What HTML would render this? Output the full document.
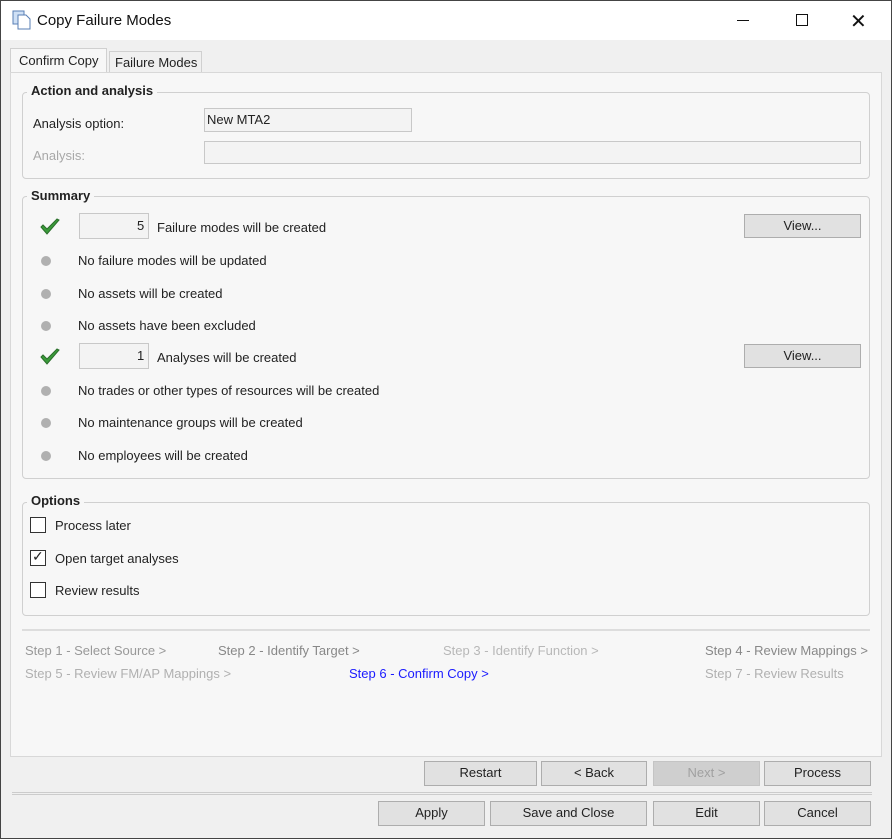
<!DOCTYPE html>
<html><head><style>
*{box-sizing:border-box;margin:0;padding:0}
body{width:892px;height:839px;background:#f0f0f0;font-family:"Liberation Sans",sans-serif;font-size:13px;color:#222;position:relative;overflow:hidden}
.a{position:absolute;white-space:nowrap}
.win{position:absolute;left:0;top:0;width:892px;height:839px;border:1px solid #444}
.grp{position:absolute;border:1px solid #d0d0d0;border-radius:4px}
.gt{position:absolute;font-weight:bold;background:#f7f7f7;padding:0 4px;font-size:13px;color:#222}
.btn{position:absolute;background:#e1e1e1;border:1px solid #adadad;text-align:center;font-size:13px;line-height:22px;color:#222}
.box{position:absolute;border:1px solid #c8c8c8;background:#f3f3f3}
.dot{position:absolute;width:10px;height:10px;border-radius:50%;background:#b0b0b0}
.cb{position:absolute;width:16px;height:16px;border:1px solid #333;background:#fff}
.st{position:absolute;color:#a0a0a0;font-size:13px;white-space:nowrap}
</style></head><body>
<div class="a" style="left:0;top:0;width:892px;height:40px;background:#fff"></div>
<svg class="a" style="left:12px;top:10px" width="20" height="20"><rect x="1" y="1" width="11" height="13" fill="#cfe0f5" stroke="#5a7fb5"/><path d="M6 5h8l4 4v10H6z" fill="#fff" stroke="#5a7fb5"/></svg>
<div class="a" style="left:37px;top:12px;font-size:15px;color:#111">Copy Failure Modes</div>
<div class="a" style="left:737px;top:20px;width:12px;height:1px;background:#111"></div>
<div class="a" style="left:796px;top:14px;width:12px;height:12px;border:1px solid #111"></div>
<div class="a" style="left:850px;top:9px;font-size:20px;color:#111">✕</div>
<div class="a" style="left:10px;top:48px;width:97px;height:26px;background:#f7f7f7;border:1px solid #d0d0d0;border-bottom:none"></div>
<div class="a" style="left:19px;top:53px;font-size:13px">Confirm Copy</div>
<div class="a" style="left:109px;top:51px;width:93px;height:22px;background:#f0f0f0;border:1px solid #d0d0d0"></div>
<div class="a" style="left:115px;top:55px;font-size:13px">Failure Modes</div>
<div class="a" style="left:10px;top:72px;width:872px;height:685px;background:#f7f7f7;border:1px solid #d8d8d8"></div>
<div class="grp" style="left:22px;top:92px;width:848px;height:87px"></div>
<div class="gt" style="left:27px;top:83px">Action and analysis</div>
<div class="a" style="left:33px;top:116px">Analysis option:</div>
<div class="box" style="left:204px;top:108px;width:208px;height:24px"></div>
<div class="a" style="left:207px;top:112px">New MTA2</div>
<div class="a" style="left:33px;top:148px;color:#a8a8a8">Analysis:</div>
<div class="box" style="left:204px;top:141px;width:657px;height:23px"></div>
<div class="grp" style="left:22px;top:196px;width:848px;height:283px"></div>
<div class="gt" style="left:27px;top:188px">Summary</div>
<svg class="a" style="left:40px;top:218px" width="20" height="18"><path d="M1 9l6 7L19 2l-2-1L7 11 3 7z" fill="#3a9b3a" stroke="#2b6e2b"/></svg>
<div class="box" style="left:79px;top:213px;width:70px;height:26px"></div>
<div class="a" style="left:137px;top:218px">5</div>
<div class="a" style="left:157px;top:220px">Failure modes will be created</div>
<div class="btn" style="left:744px;top:214px;width:117px;height:24px">View...</div>
<div class="dot" style="left:41px;top:256px"></div><div class="a" style="left:78px;top:253px">No failure modes will be updated</div>
<div class="dot" style="left:41px;top:289px"></div><div class="a" style="left:78px;top:286px">No assets will be created</div>
<div class="dot" style="left:41px;top:321px"></div><div class="a" style="left:78px;top:318px">No assets have been excluded</div>
<svg class="a" style="left:40px;top:348px" width="20" height="18"><path d="M1 9l6 7L19 2l-2-1L7 11 3 7z" fill="#3a9b3a" stroke="#2b6e2b"/></svg>
<div class="box" style="left:79px;top:343px;width:70px;height:26px"></div>
<div class="a" style="left:137px;top:348px">1</div>
<div class="a" style="left:157px;top:350px">Analyses will be created</div>
<div class="btn" style="left:744px;top:344px;width:117px;height:24px">View...</div>
<div class="dot" style="left:41px;top:386px"></div><div class="a" style="left:78px;top:383px">No trades or other types of resources will be created</div>
<div class="dot" style="left:41px;top:418px"></div><div class="a" style="left:78px;top:415px">No maintenance groups will be created</div>
<div class="dot" style="left:41px;top:451px"></div><div class="a" style="left:78px;top:448px">No employees will be created</div>
<div class="grp" style="left:22px;top:502px;width:848px;height:114px"></div>
<div class="gt" style="left:27px;top:493px">Options</div>
<div class="cb" style="left:30px;top:517px"></div><div class="a" style="left:55px;top:518px">Process later</div>
<div class="cb" style="left:30px;top:550px"></div><div class="a" style="left:32px;top:548px;font-size:14px">✓</div><div class="a" style="left:55px;top:551px">Open target analyses</div>
<div class="cb" style="left:30px;top:582px"></div><div class="a" style="left:55px;top:583px">Review results</div>
<div class="a" style="left:22px;top:629px;width:848px;height:2px;background:#ddd"></div>
<div class="st" style="left:25px;top:643px;color:#999">Step 1 - Select Source &gt;</div>
<div class="st" style="left:218px;top:643px;color:#888">Step 2 - Identify Target &gt;</div>
<div class="st" style="left:443px;top:643px;color:#b8b8b8">Step 3 - Identify Function &gt;</div>
<div class="st" style="left:705px;top:643px;color:#888">Step 4 - Review Mappings &gt;</div>
<div class="st" style="left:25px;top:666px;color:#b0b0b0">Step 5 - Review FM/AP Mappings &gt;</div>
<div class="st" style="left:349px;top:666px;color:#1a1aff">Step 6 - Confirm Copy &gt;</div>
<div class="st" style="left:705px;top:666px;color:#b0b0b0">Step 7 - Review Results</div>
<div class="btn" style="left:424px;top:761px;width:113px;height:25px">Restart</div>
<div class="btn" style="left:541px;top:761px;width:106px;height:25px">&lt; Back</div>
<div class="btn" style="left:653px;top:761px;width:107px;height:25px;background:#cfcfcf;border-color:#c4c4c4;color:#a0a0a0">Next &gt;</div>
<div class="btn" style="left:764px;top:761px;width:107px;height:25px">Process</div>
<div class="a" style="left:12px;top:792px;width:860px;height:3px;border-top:1px solid #ccc;border-bottom:1px solid #ccc"></div>
<div class="btn" style="left:378px;top:801px;width:107px;height:25px">Apply</div>
<div class="btn" style="left:490px;top:801px;width:157px;height:25px">Save and Close</div>
<div class="btn" style="left:653px;top:801px;width:107px;height:25px">Edit</div>
<div class="btn" style="left:764px;top:801px;width:107px;height:25px">Cancel</div>
<div class="win"></div>
</body></html>
